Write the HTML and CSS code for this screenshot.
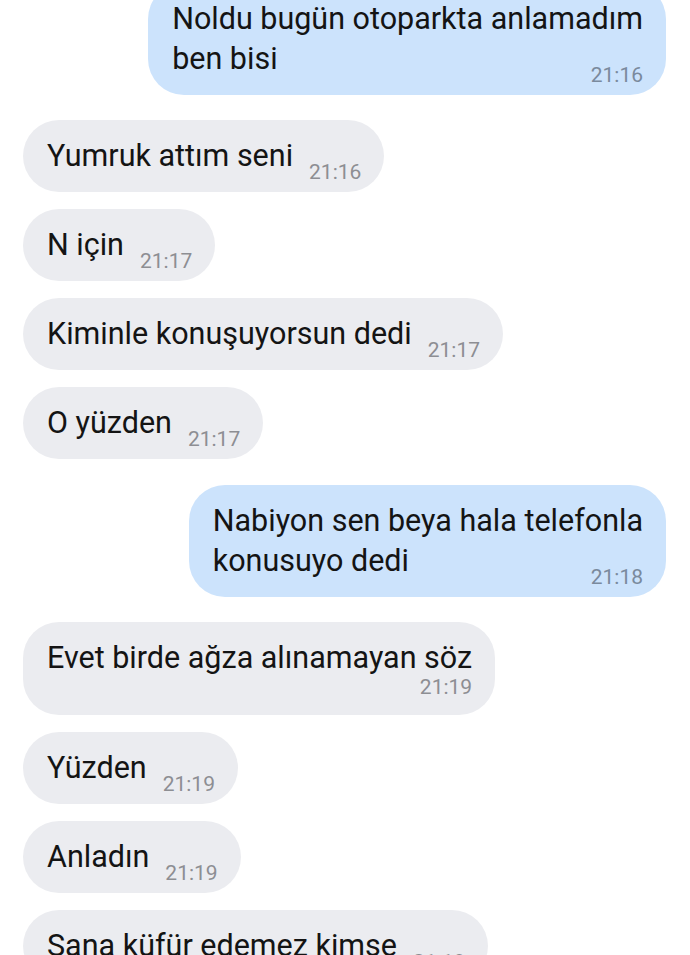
FILE: index.html
```html
<!DOCTYPE html>
<html lang="tr">
<head>
<meta charset="utf-8">
<title>Sohbet</title>
<link rel="stylesheet" href="styles.css">
</head>
<body>
<main class="chat">
  <div class="row out">
    <div class="bubble stack">
      <span class="text">Noldu bugün otoparkta anlamadım<br>ben bisi</span>
      <span class="time">21:16</span>
    </div>
  </div>
  <div class="row in switch">
    <div class="bubble inline"><span class="text">Yumruk attım seni</span><span class="time">21:16</span></div>
  </div>
  <div class="row in">
    <div class="bubble inline"><span class="text">N için</span><span class="time">21:17</span></div>
  </div>
  <div class="row in">
    <div class="bubble inline"><span class="text">Kiminle konuşuyorsun dedi</span><span class="time">21:17</span></div>
  </div>
  <div class="row in">
    <div class="bubble inline"><span class="text">O yüzden</span><span class="time">21:17</span></div>
  </div>
  <div class="row out switch wide">
    <div class="bubble stack">
      <span class="text">Nabiyon sen beya hala telefonla<br>konusuyo dedi</span>
      <span class="time">21:18</span>
    </div>
  </div>
  <div class="row in switch">
    <div class="bubble block"><span class="text">Evet birde ağza alınamayan söz</span><span class="time">21:19</span></div>
  </div>
  <div class="row in">
    <div class="bubble inline"><span class="text">Yüzden</span><span class="time">21:19</span></div>
  </div>
  <div class="row in">
    <div class="bubble inline"><span class="text">Anladın</span><span class="time">21:19</span></div>
  </div>
  <div class="row in">
    <div class="bubble inline"><span class="text">Sana küfür edemez kimse</span><span class="time">21:19</span></div>
  </div>
</main>
</body>
</html>
```
FILE: styles.css
```css
html, body {
  margin: 0;
  padding: 0;
  background: #ffffff;
  overflow: hidden;
}

body {
  font-family: Roboto, "Noto Sans", sans-serif;
  color: #141414;
}

.chat {
  display: flex;
  flex-direction: column;
  gap: 17px;
  margin-top: -17px;
  padding: 0 24px 0 23px;
}

.row {
  display: flex;
}

.row.in {
  justify-content: flex-start;
}

.row.out {
  justify-content: flex-end;
}

.row.switch {
  margin-top: 8px;
}

.row.switch.wide {
  margin-top: 9px;
}

.bubble {
  padding: 16px 23px 16px 24px;
  border-radius: 36px;
  background: #ebecf0;
}

.out .bubble {
  background: #cce3fc;
}

.text {
  font-size: 30.5px;
  line-height: 40px;
  white-space: nowrap;
}

.time {
  font-size: 21px;
  line-height: 20px;
  color: #8d8e93;
  white-space: nowrap;
}

.out .time {
  color: #7a8a9d;
}

.bubble.inline {
  display: flex;
  align-items: flex-end;
}

.bubble.inline .time {
  margin-left: 16px;
  margin-bottom: -6px;
}

.bubble.stack {
  display: grid;
}

.bubble.stack .text,
.bubble.stack .time {
  grid-area: 1 / 1;
}

.bubble.stack .time {
  justify-self: end;
  align-self: end;
  margin-bottom: -6px;
}

.bubble.block {
  display: flex;
  flex-direction: column;
}

.bubble.block .time {
  align-self: flex-end;
  margin-top: -1px;
  margin-bottom: 2px;
}
```
